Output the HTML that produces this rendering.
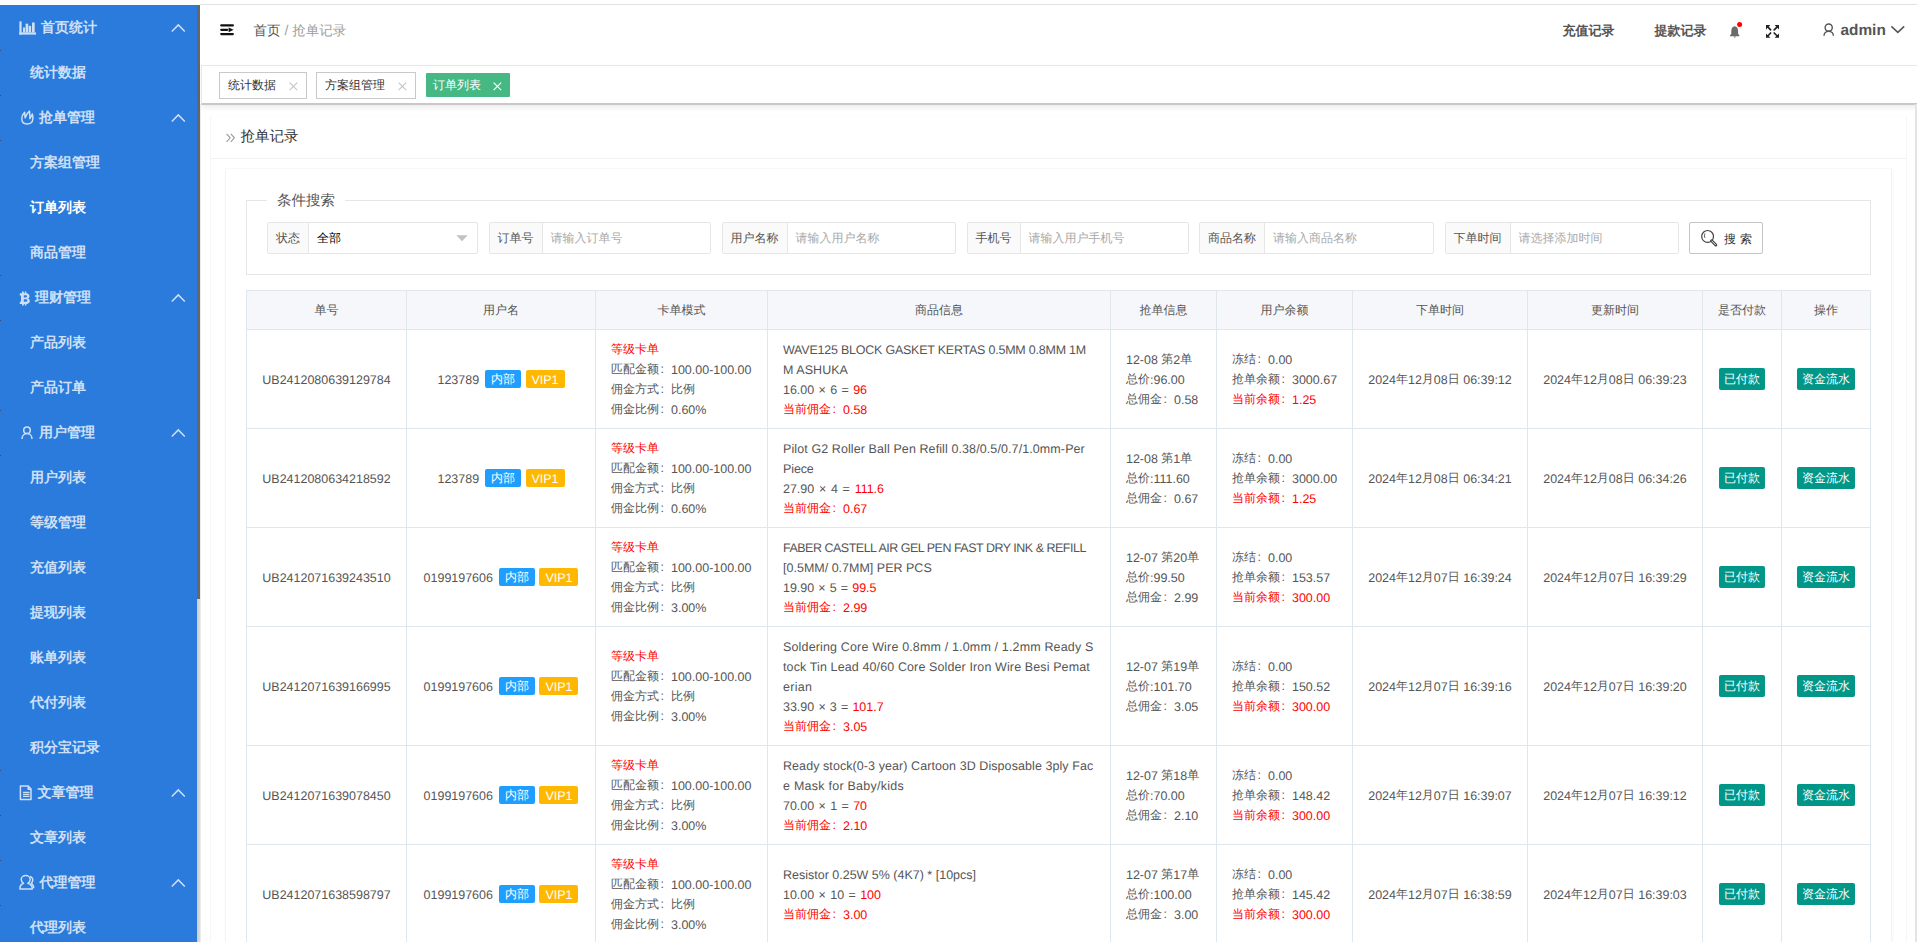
<!DOCTYPE html>
<html><head><meta charset="utf-8">
<style>
@font-face{font-family:"LSN";src:local("Liberation Sans");unicode-range:U+0000-024F,U+2000-206F;size-adjust:104%}
@font-face{font-family:"LSN";src:local("Liberation Sans Bold");font-weight:bold;unicode-range:U+0000-024F,U+2000-206F;size-adjust:104%}
html,body{margin:0;padding:0;width:1917px;height:942px;overflow:hidden;background:#fff;font-family:LSN,"Liberation Sans",sans-serif;text-rendering:geometricPrecision}
*{box-sizing:border-box}
.abs{position:absolute}
/* sidebar */
#side{position:absolute;left:0;top:5px;width:197px;height:937px;background:#2a7bdc;}
#sbtrack{position:absolute;left:197px;top:5px;width:3px;height:937px;background:linear-gradient(90deg,#cdcdcd,#dcdcdc)}
#sbthumb{position:absolute;left:197px;top:5px;width:3px;height:594px;background:#676767}
.mi{position:absolute;left:0;width:197px;height:45px;line-height:45px;font-size:14px;font-weight:bold;color:#cfe0f6;white-space:nowrap}
.mi .t{position:absolute;top:1px}
.mi.sub .t{left:30px}
.mi.on{color:#fff}
.mi svg{position:absolute}
.chev{position:absolute;left:171px;top:19px;width:15px;height:9px}
/* header */
#hdline{position:absolute;left:200px;top:4px;width:1717px;height:1px;background:#e2e2e2}
.htxt{position:absolute;font-size:14px;line-height:20px;white-space:nowrap}
/* tabs */
#tabs{position:absolute;left:201px;top:65px;width:1716px;height:40px;background:#fff;border-top:1px solid #e8e8e8;border-left:1px solid #e8e8e8;border-bottom:2px solid #c8c8c8;box-shadow:0 3px 5px rgba(0,0,0,.07)}
.tab{position:absolute;top:6px;height:27px;border:1px solid #c9c9c9;font-size:12px;line-height:25px;color:#333;white-space:nowrap;background:#fff}
.tab svg{position:absolute}
.tab.on{top:7px;height:24px;line-height:24px;background:#45b883;border:none;border-radius:1px;color:#fff}
/* content */
#leftline{position:absolute;left:200px;top:104px;width:1px;height:838px;background:#ececec}
#rightline{position:absolute;left:1915px;top:104px;width:2px;height:838px;background:#e4e4e4}
#card{position:absolute;left:210px;top:115px;width:1697px;height:840px;border:1px solid #f6f6f6;border-top-color:#fdfdfd;border-radius:2px}
#cardhd{position:absolute;left:0;top:0;width:100%;height:43px;border-bottom:1px solid #f2f2f2}
#inner{position:absolute;left:225px;top:168px;width:1667px;height:800px;border:1px solid #f3f3f3;border-top-color:#f9f9f9;box-shadow:1px 1px 3px rgba(0,0,0,.03)}
#fs{position:absolute;left:246px;top:200px;width:1625px;height:75px;border:1px solid #e6e6e6}
#lg{position:absolute;left:267px;top:191px;height:18px;line-height:20px;padding:0 10px;background:#fff;font-size:14.5px;color:#555;white-space:nowrap}
.ig{position:absolute;top:222px;height:32px;border:1px solid #e6e6e6;border-radius:2px;background:#fff;font-size:12px;white-space:nowrap}
.ig .lb{position:absolute;left:0;top:0;height:30px;line-height:30px;background:#fafafa;border-right:1px solid #e6e6e6;color:#555;text-align:center}
.ig .ph{position:absolute;top:0;line-height:30px;color:#a9a9a9}
/* table */
table{position:absolute;left:246px;top:290px;border-collapse:collapse;table-layout:fixed;font-size:12px;color:#555}
td,th{border:1px solid #dfe6ec;padding:9px 15px;line-height:20px;white-space:nowrap;vertical-align:middle}
th{background:#f5f7fa;font-weight:normal;height:39px;padding:0 15px;color:#555}
.c{text-align:center}
i.l{font-style:normal;position:relative;top:1px}
.r{color:#f00}
.bdg{display:inline-block;height:18px;line-height:18px;padding:0 6px;border-radius:2px;color:#fff;font-size:12px;vertical-align:middle;position:relative;top:-1px}
b.cl{display:inline-block;width:12px;font-weight:normal;padding-left:1.5px}
.btn{display:inline-block;height:22px;line-height:22px;padding:0 5px;border-radius:2px;color:#fff;background:#009688;font-size:12px}
</style></head><body>

<div id="side"></div>
<div class="mi" style="top:5px"><span class="t" style="left:41px">首页统计</span></div>
<div class="mi" style="top:50px"><span class="t" style="left:30px">统计数据</span></div>
<div class="mi" style="top:95px"><span class="t" style="left:39px">抢单管理</span></div>
<div class="mi" style="top:140px"><span class="t" style="left:30px">方案组管理</span></div>
<div class="mi on" style="top:185px"><span class="t" style="left:30px">订单列表</span></div>
<div class="mi" style="top:230px"><span class="t" style="left:30px">商品管理</span></div>
<div class="mi" style="top:275px"><span class="t" style="left:35px">理财管理</span></div>
<div class="mi" style="top:320px"><span class="t" style="left:30px">产品列表</span></div>
<div class="mi" style="top:365px"><span class="t" style="left:30px">产品订单</span></div>
<div class="mi" style="top:410px"><span class="t" style="left:39px">用户管理</span></div>
<div class="mi" style="top:455px"><span class="t" style="left:30px">用户列表</span></div>
<div class="mi" style="top:500px"><span class="t" style="left:30px">等级管理</span></div>
<div class="mi" style="top:545px"><span class="t" style="left:30px">充值列表</span></div>
<div class="mi" style="top:590px"><span class="t" style="left:30px">提现列表</span></div>
<div class="mi" style="top:635px"><span class="t" style="left:30px">账单列表</span></div>
<div class="mi" style="top:680px"><span class="t" style="left:30px">代付列表</span></div>
<div class="mi" style="top:725px"><span class="t" style="left:30px">积分宝记录</span></div>
<div class="mi" style="top:770px"><span class="t" style="left:37.5px">文章管理</span></div>
<div class="mi" style="top:815px"><span class="t" style="left:30px">文章列表</span></div>
<div class="mi" style="top:860px"><span class="t" style="left:39.5px">代理管理</span></div>
<div class="mi" style="top:905px"><span class="t" style="left:30px">代理列表</span></div>
<svg class="abs" style="left:0;top:0" width="197" height="942" viewBox="0 0 197 942">
<g fill="#cfe0f6">
<!-- chart -->
<rect x="19.4" y="21.4" width="2.2" height="13.2"/><rect x="19.4" y="32.4" width="16.6" height="2.2"/>
<rect x="23" y="27.5" width="2.1" height="5"/><rect x="25.6" y="23.7" width="2.6" height="8.8"/><rect x="28.7" y="25.9" width="2.4" height="6.6"/><rect x="32" y="22.5" width="2.7" height="10"/>
</g>
<g fill="none" stroke="#cfe0f6" stroke-width="1.5" stroke-linejoin="round">
<!-- fire -->
<path d="M27 124 C23.5 124 21.8 121.5 21.8 118.8 C21.8 116 23.3 113.6 24.6 112.3 L25.2 117.8 C26 115 27.5 112.6 29.5 111.1 L30 118.8 C30.8 117 31.8 115.2 32.3 113.9 C32.8 115.6 33 117.3 32.8 119.3 C32.6 121.8 30.8 124 27 124 Z"/>
<!-- user -->
<circle cx="27" cy="430.3" r="3.3"/>
<path d="M22 439 C22 436 24 433.6 27 433.6 C30 433.6 32 436 32 439"/>
<!-- doc -->
<path d="M20.4 786 H28.2 L31 789 V799.5 H20.4 Z"/>
<path d="M28.2 786.2 V789.2 H31"/>
<path d="M23 792.4 H29.5 M23 794.4 H29.5 M23 796.4 H29.5" stroke-width="1.2"/>
<!-- user2 -->
<path d="M23.6 883.3 C21.9 882.4 21.2 880.9 21.2 879.6 C21.2 877.3 23.2 875.6 25.7 875.6 C28.2 875.6 30.2 877.3 30.2 879.6 C30.2 880.9 29.5 882.4 27.8 883.3 C30.6 884.2 32.3 886.2 32.3 888.9 H19.9 C19.9 886.2 21 884.2 23.6 883.3 Z"/>
<path d="M30 876.4 C31.9 877.1 32.8 878.6 32.8 880.1 C32.8 881.4 32.2 882.5 31.2 883.3 C32.9 884.3 33.7 885.9 33.7 888.2"/>
</g>
<g fill="#cfe0f6">
<!-- bitcoin -->
<path d="M22 291.5 H23.8 V293.2 H24.8 V291.5 H26.3 V293.3 C28.2 293.6 29.5 294.6 29.5 296.3 C29.5 297.4 28.9 298.1 28.1 298.5 C29.2 298.9 29.8 299.8 29.8 301 C29.8 302.9 28.4 303.8 26.3 303.9 V305.4 H24.8 V304 H23.8 V305.4 H22 V304 H19.8 V301.8 H21 V295.4 H19.8 V293.2 H22 Z M23.8 295.3 V297.4 H25.8 C26.6 297.4 27 297 27 296.3 C27 295.7 26.6 295.3 25.8 295.3 Z M23.8 299.3 V301.8 H26 C26.9 301.8 27.3 301.3 27.3 300.6 C27.3 299.8 26.9 299.3 26 299.3 Z" fill-rule="evenodd"/>
</g>
<g fill="none" stroke="#cfe0f6" stroke-width="1.5">
<path d="M171.8 31.5 L178.3 24.9 L184.8 31.5"/>
<path d="M171.8 121.5 L178.3 114.9 L184.8 121.5"/>
<path d="M171.8 301.5 L178.3 294.9 L184.8 301.5"/>
<path d="M171.8 436.5 L178.3 429.9 L184.8 436.5"/>
<path d="M171.8 796.5 L178.3 789.9 L184.8 796.5"/>
<path d="M171.8 886.5 L178.3 879.9 L184.8 886.5"/>
</g>
</svg>
<div class="abs" style="left:0;top:50px;width:1px;height:1px;background:#3d4d66"></div><div class="abs" style="left:0;top:95px;width:1px;height:1px;background:#3d4d66"></div><div class="abs" style="left:0;top:140px;width:1px;height:1px;background:#3d4d66"></div><div class="abs" style="left:0;top:275px;width:1px;height:1px;background:#3d4d66"></div><div class="abs" style="left:0;top:320px;width:1px;height:1px;background:#3d4d66"></div><div class="abs" style="left:0;top:410px;width:1px;height:1px;background:#3d4d66"></div><div class="abs" style="left:0;top:455px;width:1px;height:1px;background:#3d4d66"></div><div class="abs" style="left:0;top:770px;width:1px;height:1px;background:#3d4d66"></div><div class="abs" style="left:0;top:815px;width:1px;height:1px;background:#3d4d66"></div><div class="abs" style="left:0;top:860px;width:1px;height:1px;background:#3d4d66"></div><div class="abs" style="left:0;top:905px;width:1px;height:1px;background:#3d4d66"></div>
<div id="sbtrack"></div>
<div id="sbthumb"></div>
<div id="hdline"></div>

<svg class="abs" style="left:218px;top:22px" width="18" height="16" viewBox="218 22 18 16">
<g stroke="#111" stroke-width="2.3" stroke-linecap="round">
<path d="M221.3 25.4 H232.8"/><path d="M221.3 29.8 H227.2"/><path d="M221.3 34.1 H232.8"/>
</g>
<path d="M228.6 27.4 L233.6 29.8 L228.6 32.2 Z" fill="#111"/>
</svg>
<div class="htxt" style="left:253.5px;top:20px;color:#555;font-size:13.5px">首页<span style="color:#a0a0a0"> / 抢单记录</span></div>
<div class="htxt" style="left:1562.5px;top:21px;color:#555;font-weight:bold;font-size:13px">充值记录</div>
<div class="htxt" style="left:1654.5px;top:21px;color:#555;font-weight:bold;font-size:13px">提款记录</div>
<svg class="abs" style="left:1726px;top:20px" width="20" height="20" viewBox="1726 20 20 20">
<path d="M1734.7 26.2 C1732.3 26.5 1731.3 28.6 1731.3 31 V33.8 L1730 35.6 V36.3 H1739.4 V35.6 L1738.1 33.8 V31 C1738.1 28.6 1737.1 26.5 1734.7 26.2 Z" fill="#6b6b6b"/>
<path d="M1733.6 36.4 C1733.8 37.3 1734.2 37.6 1734.7 37.6 C1735.2 37.6 1735.6 37.3 1735.8 36.4 Z" fill="#6b6b6b"/>
<circle cx="1739.6" cy="24.4" r="2.5" fill="#f00"/>
</svg>
<svg class="abs" style="left:1764px;top:23px" width="17" height="17" viewBox="1764 23 17 17">
<g fill="#222"><path d="M1766 25 H1770.4 L1766 29.4 Z"/><path d="M1779 25 H1774.6 L1779 29.4 Z"/><path d="M1766 37.8 H1770.4 L1766 33.4 Z"/><path d="M1779 37.8 H1774.6 L1779 33.4 Z"/></g>
<g stroke="#222" stroke-width="1.7" stroke-linecap="round"><path d="M1767.8 26.8 L1770.6 29.8"/><path d="M1777.2 26.8 L1774.2 29.8"/><path d="M1767.8 36 L1770.6 33"/><path d="M1777.2 36 L1774.2 33"/></g>
</svg>
<svg class="abs" style="left:1820px;top:21px" width="18" height="18" viewBox="1820 21 18 18">
<g fill="none" stroke="#555" stroke-width="1.4">
<circle cx="1828.7" cy="27.6" r="3.6"/>
<path d="M1824 35.8 C1824 33.2 1826 31.2 1828.7 31.2 C1831.4 31.2 1833.4 33.2 1833.4 35.8"/>
</g>
</svg>
<div class="htxt" style="left:1840.5px;top:21px;color:#555;font-weight:bold;font-size:14.8px">admin</div>
<svg class="abs" style="left:1889px;top:23px" width="18" height="12" viewBox="1889 23 18 12">
<path d="M1891.4 26.4 L1897.8 32.4 L1904.2 26.4" fill="none" stroke="#555" stroke-width="1.5"/>
</svg>


<div id="tabs">
<div class="tab" style="left:17px;width:88px"><span style="position:absolute;left:8px">统计数据</span><svg style="left:69px;top:8.5px" width="9" height="9" viewBox="0 0 9 9"><path d="M0.6 0.6 L8.2 8.2 M8.2 0.6 L0.6 8.2" stroke="#c4c4c4" stroke-width="1.1"/></svg></div>
<div class="tab" style="left:114px;width:100px"><span style="position:absolute;left:8px">方案组管理</span><svg style="left:81px;top:8.5px" width="9" height="9" viewBox="0 0 9 9"><path d="M0.6 0.6 L8.2 8.2 M8.2 0.6 L0.6 8.2" stroke="#c4c4c4" stroke-width="1.1"/></svg></div>
<div class="tab on" style="left:224px;width:84px"><span style="position:absolute;left:7px">订单列表</span><svg style="left:67px;top:8.5px" width="9" height="9" viewBox="0 0 9 9"><path d="M0.6 0.6 L8.2 8.2 M8.2 0.6 L0.6 8.2" stroke="#fff" stroke-width="1.2"/></svg></div>
</div>
<div id="leftline"></div>
<div id="rightline"></div>
<div id="card"><div id="cardhd"></div></div>
<div id="inner"></div>
<div class="abs" style="left:225px;top:129px;width:12px;height:18px"><svg width="12" height="18" viewBox="225 127 12 18"><path d="M226.6 131.8 L230.2 135.8 L226.6 139.8 M230.8 131.8 L234.4 135.8 L230.8 139.8" fill="none" stroke="#9a9a9a" stroke-width="1.1"/></svg></div>
<div class="abs" style="left:240.5px;top:127px;line-height:20px;font-size:14.5px;color:#333;white-space:nowrap">抢单记录</div>
<div id="fs"></div>
<div id="lg">条件搜索</div>
<div class="ig" style="left:267px;width:211px"><div class="lb" style="width:41px">状态</div><div class="ph" style="left:49px;color:#000">全部</div><svg style="position:absolute;left:188px;top:12px" width="12" height="7" viewBox="0 0 12 7"><path d="M0.3 0.3 H11.7 L6 6.3 Z" fill="#c2c2c2"/></svg></div>
<div class="ig" style="left:488.5px;width:222px"><div class="lb" style="width:53px">订单号</div><div class="ph" style="left:61px">请输入订单号</div></div>
<div class="ig" style="left:721.5px;width:234px"><div class="lb" style="width:65px">用户名称</div><div class="ph" style="left:73px">请输入用户名称</div></div>
<div class="ig" style="left:966.5px;width:222px"><div class="lb" style="width:53px">手机号</div><div class="ph" style="left:61px">请输入用户手机号</div></div>
<div class="ig" style="left:1199px;width:235px"><div class="lb" style="width:65px">商品名称</div><div class="ph" style="left:73px">请输入商品名称</div></div>
<div class="ig" style="left:1444.5px;width:234px"><div class="lb" style="width:65px">下单时间</div><div class="ph" style="left:73px">请选择添加时间</div></div>
<div class="abs" style="left:1689px;top:222px;width:74px;height:32px;border:1px solid #c4c4c4;border-radius:2px;background:#fff"></div>
<svg class="abs" style="left:1699px;top:228px" width="20" height="20" viewBox="1699 228 20 20"><circle cx="1707.6" cy="236.4" r="5.9" fill="none" stroke="#444" stroke-width="1.2"/><path d="M1711.6 240.8 L1715.8 245" stroke="#444" stroke-width="3" stroke-linecap="round"/><path d="M1711.9 241.1 L1715.5 244.7" stroke="#fff" stroke-width="0.9" stroke-linecap="round"/><path d="M1705 233.5 C1704.3 234.8 1704.3 236.6 1705 237.8" fill="none" stroke="#444" stroke-width="1"/></svg>
<div class="abs" style="left:1724px;top:229px;line-height:20px;font-size:12px;color:#333;letter-spacing:4px;white-space:nowrap">搜索</div>


<table id="tbl" style="width:1625px">
<colgroup><col style="width:160px"><col style="width:189px"><col style="width:172px"><col style="width:343px"><col style="width:106px"><col style="width:136px"><col style="width:175px"><col style="width:175px"><col style="width:79px"><col style="width:89px"></colgroup>
<tr><th>单号</th><th>用户名</th><th>卡单模式</th><th>商品信息</th><th>抢单信息</th><th>用户余额</th><th>下单时间</th><th>更新时间</th><th>是否付款</th><th>操作</th></tr>
<tr><td class="c"><i class="l">UB2412080639129784</i></td><td class="c"><i class="l">123789</i> <span class="bdg" style="background:#1e9fff;margin-left:2.5px">内部</span> <span class="bdg" style="background:#ffb800;margin-left:1px"><i class="l">VIP1</i></span></td><td><span class="r">等级卡单</span><br>匹配金额<b class="cl">:</b><i class="l">100.00-100.00</i><br>佣金方式<b class="cl">:</b>比例<br>佣金比例<b class="cl">:</b><i class="l">0.60%</i></td><td><span class="pl" style="letter-spacing:-0.21px"><i class="l">WAVE125 BLOCK GASKET KERTAS 0.5MM 0.8MM 1M</i></span><br><span class="pl" style="letter-spacing:0.07px"><i class="l">M ASHUKA</i></span><br><span class="pl" style="word-spacing:0.9px"><i class="l">16.00 × 6 =</i> <span class="r"><i class="l">96</i></span></span><br><span class="r">当前佣金<b class="cl">:</b><i class="l">0.58</i></span></td><td><i class="l">12-08</i> 第<i class="l">2</i>单<br>总价<i class="l">:96.00</i><br>总佣金<b class="cl">:</b><i class="l">0.58</i></td><td>冻结<b class="cl">:</b><i class="l">0.00</i><br>抢单余额<b class="cl">:</b><i class="l">3000.67</i><br><span class="r">当前余额<b class="cl">:</b><i class="l">1.25</i></span></td><td class="c"><i class="l">2024</i>年<i class="l">12</i>月<i class="l">08</i>日 <i class="l">06:39:12</i></td><td class="c"><i class="l">2024</i>年<i class="l">12</i>月<i class="l">08</i>日 <i class="l">06:39:23</i></td><td class="c"><span class="btn">已付款</span></td><td class="c"><span class="btn">资金流水</span></td></tr>
<tr><td class="c"><i class="l">UB2412080634218592</i></td><td class="c"><i class="l">123789</i> <span class="bdg" style="background:#1e9fff;margin-left:2.5px">内部</span> <span class="bdg" style="background:#ffb800;margin-left:1px"><i class="l">VIP1</i></span></td><td><span class="r">等级卡单</span><br>匹配金额<b class="cl">:</b><i class="l">100.00-100.00</i><br>佣金方式<b class="cl">:</b>比例<br>佣金比例<b class="cl">:</b><i class="l">0.60%</i></td><td><span class="pl" style="letter-spacing:0.11px"><i class="l">Pilot G2 Roller Ball Pen Refill 0.38/0.5/0.7/1.0mm-Per</i></span><br><span class="pl" style="letter-spacing:-0.1px"><i class="l">Piece</i></span><br><span class="pl" style="word-spacing:1.27px"><i class="l">27.90 × 4 =</i> <span class="r"><i class="l">111.6</i></span></span><br><span class="r">当前佣金<b class="cl">:</b><i class="l">0.67</i></span></td><td><i class="l">12-08</i> 第<i class="l">1</i>单<br>总价<i class="l">:111.60</i><br>总佣金<b class="cl">:</b><i class="l">0.67</i></td><td>冻结<b class="cl">:</b><i class="l">0.00</i><br>抢单余额<b class="cl">:</b><i class="l">3000.00</i><br><span class="r">当前余额<b class="cl">:</b><i class="l">1.25</i></span></td><td class="c"><i class="l">2024</i>年<i class="l">12</i>月<i class="l">08</i>日 <i class="l">06:34:21</i></td><td class="c"><i class="l">2024</i>年<i class="l">12</i>月<i class="l">08</i>日 <i class="l">06:34:26</i></td><td class="c"><span class="btn">已付款</span></td><td class="c"><span class="btn">资金流水</span></td></tr>
<tr><td class="c"><i class="l">UB2412071639243510</i></td><td class="c"><i class="l">0199197606</i> <span class="bdg" style="background:#1e9fff;margin-left:2.5px">内部</span> <span class="bdg" style="background:#ffb800;margin-left:1px"><i class="l">VIP1</i></span></td><td><span class="r">等级卡单</span><br>匹配金额<b class="cl">:</b><i class="l">100.00-100.00</i><br>佣金方式<b class="cl">:</b>比例<br>佣金比例<b class="cl">:</b><i class="l">3.00%</i></td><td><span class="pl" style="letter-spacing:-0.48px"><i class="l">FABER CASTELL AIR GEL PEN FAST DRY INK &amp; REFILL</i></span><br><span class="pl" style="letter-spacing:0.02px"><i class="l">[0.5MM/ 0.7MM] PER PCS</i></span><br><span class="pl" style="word-spacing:0.67px"><i class="l">19.90 × 5 =</i> <span class="r"><i class="l">99.5</i></span></span><br><span class="r">当前佣金<b class="cl">:</b><i class="l">2.99</i></span></td><td><i class="l">12-07</i> 第<i class="l">20</i>单<br>总价<i class="l">:99.50</i><br>总佣金<b class="cl">:</b><i class="l">2.99</i></td><td>冻结<b class="cl">:</b><i class="l">0.00</i><br>抢单余额<b class="cl">:</b><i class="l">153.57</i><br><span class="r">当前余额<b class="cl">:</b><i class="l">300.00</i></span></td><td class="c"><i class="l">2024</i>年<i class="l">12</i>月<i class="l">07</i>日 <i class="l">16:39:24</i></td><td class="c"><i class="l">2024</i>年<i class="l">12</i>月<i class="l">07</i>日 <i class="l">16:39:29</i></td><td class="c"><span class="btn">已付款</span></td><td class="c"><span class="btn">资金流水</span></td></tr>
<tr><td class="c"><i class="l">UB2412071639166995</i></td><td class="c"><i class="l">0199197606</i> <span class="bdg" style="background:#1e9fff;margin-left:2.5px">内部</span> <span class="bdg" style="background:#ffb800;margin-left:1px"><i class="l">VIP1</i></span></td><td><span class="r">等级卡单</span><br>匹配金额<b class="cl">:</b><i class="l">100.00-100.00</i><br>佣金方式<b class="cl">:</b>比例<br>佣金比例<b class="cl">:</b><i class="l">3.00%</i></td><td><span class="pl" style="letter-spacing:0.17px"><i class="l">Soldering Core Wire 0.8mm / 1.0mm / 1.2mm Ready S</i></span><br><span class="pl" style="letter-spacing:0.13px"><i class="l">tock Tin Lead 40/60 Core Solder Iron Wire Besi Pemat</i></span><br><span class="pl" style="letter-spacing:0.33px"><i class="l">erian</i></span><br><span class="pl" style="word-spacing:0.71px"><i class="l">33.90 × 3 =</i> <span class="r"><i class="l">101.7</i></span></span><br><span class="r">当前佣金<b class="cl">:</b><i class="l">3.05</i></span></td><td><i class="l">12-07</i> 第<i class="l">19</i>单<br>总价<i class="l">:101.70</i><br>总佣金<b class="cl">:</b><i class="l">3.05</i></td><td>冻结<b class="cl">:</b><i class="l">0.00</i><br>抢单余额<b class="cl">:</b><i class="l">150.52</i><br><span class="r">当前余额<b class="cl">:</b><i class="l">300.00</i></span></td><td class="c"><i class="l">2024</i>年<i class="l">12</i>月<i class="l">07</i>日 <i class="l">16:39:16</i></td><td class="c"><i class="l">2024</i>年<i class="l">12</i>月<i class="l">07</i>日 <i class="l">16:39:20</i></td><td class="c"><span class="btn">已付款</span></td><td class="c"><span class="btn">资金流水</span></td></tr>
<tr><td class="c"><i class="l">UB2412071639078450</i></td><td class="c"><i class="l">0199197606</i> <span class="bdg" style="background:#1e9fff;margin-left:2.5px">内部</span> <span class="bdg" style="background:#ffb800;margin-left:1px"><i class="l">VIP1</i></span></td><td><span class="r">等级卡单</span><br>匹配金额<b class="cl">:</b><i class="l">100.00-100.00</i><br>佣金方式<b class="cl">:</b>比例<br>佣金比例<b class="cl">:</b><i class="l">3.00%</i></td><td><span class="pl" style="letter-spacing:0.09px"><i class="l">Ready stock(0-3 year) Cartoon 3D Disposable 3ply Fac</i></span><br><span class="pl" style="letter-spacing:0.26px"><i class="l">e Mask for Baby/kids</i></span><br><span class="pl" style="word-spacing:0.9px"><i class="l">70.00 × 1 =</i> <span class="r"><i class="l">70</i></span></span><br><span class="r">当前佣金<b class="cl">:</b><i class="l">2.10</i></span></td><td><i class="l">12-07</i> 第<i class="l">18</i>单<br>总价<i class="l">:70.00</i><br>总佣金<b class="cl">:</b><i class="l">2.10</i></td><td>冻结<b class="cl">:</b><i class="l">0.00</i><br>抢单余额<b class="cl">:</b><i class="l">148.42</i><br><span class="r">当前余额<b class="cl">:</b><i class="l">300.00</i></span></td><td class="c"><i class="l">2024</i>年<i class="l">12</i>月<i class="l">07</i>日 <i class="l">16:39:07</i></td><td class="c"><i class="l">2024</i>年<i class="l">12</i>月<i class="l">07</i>日 <i class="l">16:39:12</i></td><td class="c"><span class="btn">已付款</span></td><td class="c"><span class="btn">资金流水</span></td></tr>
<tr><td class="c"><i class="l">UB2412071638598797</i></td><td class="c"><i class="l">0199197606</i> <span class="bdg" style="background:#1e9fff;margin-left:2.5px">内部</span> <span class="bdg" style="background:#ffb800;margin-left:1px"><i class="l">VIP1</i></span></td><td><span class="r">等级卡单</span><br>匹配金额<b class="cl">:</b><i class="l">100.00-100.00</i><br>佣金方式<b class="cl">:</b>比例<br>佣金比例<b class="cl">:</b><i class="l">3.00%</i></td><td><span class="pl" style="letter-spacing:0.01px"><i class="l">Resistor 0.25W 5% (4K7) * [10pcs]</i></span><br><span class="pl" style="word-spacing:0.92px"><i class="l">10.00 × 10 =</i> <span class="r"><i class="l">100</i></span></span><br><span class="r">当前佣金<b class="cl">:</b><i class="l">3.00</i></span></td><td><i class="l">12-07</i> 第<i class="l">17</i>单<br>总价<i class="l">:100.00</i><br>总佣金<b class="cl">:</b><i class="l">3.00</i></td><td>冻结<b class="cl">:</b><i class="l">0.00</i><br>抢单余额<b class="cl">:</b><i class="l">145.42</i><br><span class="r">当前余额<b class="cl">:</b><i class="l">300.00</i></span></td><td class="c"><i class="l">2024</i>年<i class="l">12</i>月<i class="l">07</i>日 <i class="l">16:38:59</i></td><td class="c"><i class="l">2024</i>年<i class="l">12</i>月<i class="l">07</i>日 <i class="l">16:39:03</i></td><td class="c"><span class="btn">已付款</span></td><td class="c"><span class="btn">资金流水</span></td></tr>
</table>

</body></html>
